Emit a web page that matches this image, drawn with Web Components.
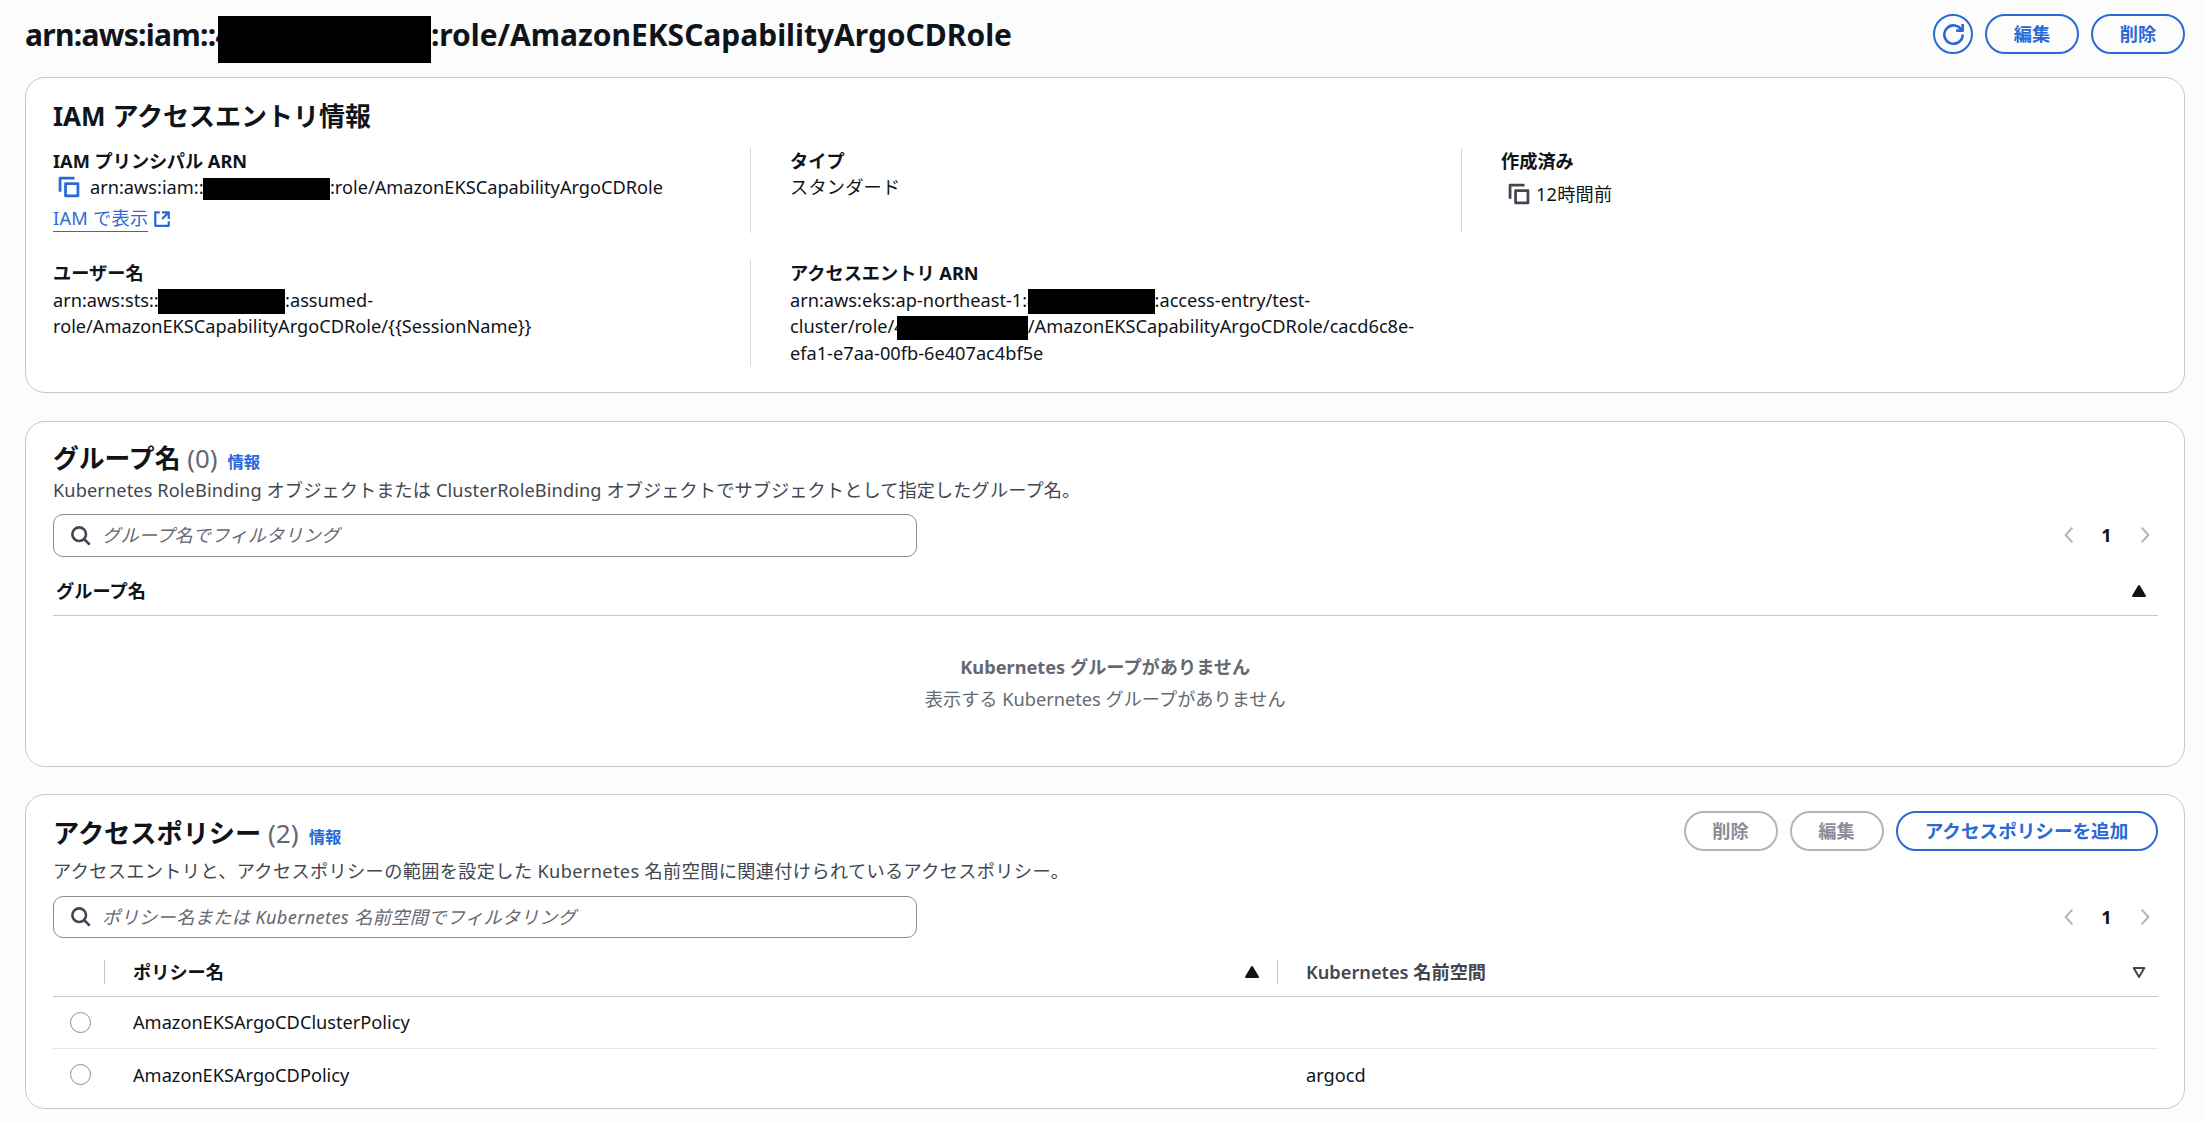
<!DOCTYPE html>
<html lang="ja"><head><meta charset="utf-8"><title>IAM access entry</title>
<style>
html,body{margin:0;padding:0}
body{background:#fcfcfd;color:#0f141a;font:18.2px/26.6px "Noto Sans","Noto Sans CJK JP",sans-serif;width:2204px;height:1122px;overflow:hidden}
</style></head><body>
<x-page>
  <x-pagehead>
    <span><span style="letter-spacing:-.7px">arn:aws:iam::4</span><x-redact style="--w:213px;--h:47px;--ml:-14px;--mr:0px;--t:2px"></x-redact>:role/AmazonEKSCapabilityArgoCDRole</span>
    <x-btn slot="actions" kind="icon"><x-icon name="refresh" size="21"></x-icon></x-btn>
    <x-btn slot="actions">編集</x-btn>
    <x-btn slot="actions">削除</x-btn>
  </x-pagehead>

  <x-card style="--pad:22px 27px 26px;--mb:28px">
    <x-heading>IAM アクセスエントリ情報</x-heading>
    <x-kvgrid>
      <x-kv label="IAM プリンシパル ARN" style="--h:85px">
        <x-copyline><x-icon name="copy" size="22" color="#2a69d6"></x-icon><span>arn:aws:iam::4<x-redact style="--w:127px;--h:22px;--ml:-11px;--mr:0px"></x-redact>:role/AmazonEKSCapabilityArgoCDRole</span></x-copyline>
        <x-extlink>IAM で表示</x-extlink>
      </x-kv>
      <x-kv label="タイプ" divider style="--h:85px"><span style="position:relative;top:-1px;letter-spacing:.2px">スタンダード</span></x-kv>
      <x-kv label="作成済み" divider style="--h:85px">
        <x-timeline><x-icon name="copy" size="22" color="#424650"></x-icon><span style="letter-spacing:.2px">12時間前</span></x-timeline>
      </x-kv>
      <x-kv label="ユーザー名">arn:aws:sts::4<x-redact style="--w:127px;--h:25px;--ml:-11px;--mr:0px"></x-redact>:assumed-<br>role/AmazonEKSCapabilityArgoCDRole/{{SessionName}}</x-kv>
      <x-kv label="アクセスエントリ ARN" divider style="--h:106px">arn:aws:eks:ap-northeast-1:4<x-redact style="--w:127px;--h:25px;--ml:-10px;--mr:0px"></x-redact>:access-entry/test-<br>cluster/role/4<x-redact style="--w:131px;--h:24px;--ml:-8px;--mr:0px"></x-redact>/AmazonEKSCapabilityArgoCDRole/cacd6c8e-<br>efa1-e7aa-00fb-6e407ac4bf5e</x-kv>
    </x-kvgrid>
  </x-card>

  <x-card style="--pad:20px 26.5px 0 27px;--mb:27px;--h:346px">
    <x-tablehead count="(0)" desc="Kubernetes RoleBinding オブジェクトまたは ClusterRoleBinding オブジェクトでサブジェクトとして指定したグループ名。" style="--desc-ls:.1px;--h2:25.8px;--h2-gap:0px;--desc-top:3px">グループ名</x-tablehead>
    <x-filterrow placeholder="グループ名でフィルタリング" style="--top:10px;--ih:43px;--ph-ls:.2px"></x-filterrow>
    <x-grouphead><span>グループ名</span><x-icon name="up" size="16"></x-icon></x-grouphead>
    <x-empty title-text="Kubernetes グループがありません">表示する Kubernetes グループがありません</x-empty>
  </x-card>

  <x-card style="--pad:22px 26.5px 0 27px;--h:315px">
    <x-tablehead count="(2)" desc="アクセスエントリと、アクセスポリシーの範囲を設定した Kubernetes 名前空間に関連付けられているアクセスポリシー。" style="--desc-top:9px;--desc-ls:.35px">アクセスポリシー
      <x-btn slot="actions" disabled>削除</x-btn>
      <x-btn slot="actions" disabled>編集</x-btn>
      <x-btn slot="actions" wide>アクセスポリシーを追加</x-btn>
    </x-tablehead>
    <x-filterrow placeholder="ポリシー名または Kubernetes 名前空間でフィルタリング" style="--top:11px;--ih:42px;--ph-ls:.35px"></x-filterrow>
    <x-policytable>
      <x-policyhead></x-policyhead>
      <x-policyrow name="AmazonEKSArgoCDClusterPolicy" ns="" sep></x-policyrow>
      <x-policyrow name="AmazonEKSArgoCDPolicy" ns="argocd"></x-policyrow>
    </x-policytable>
  </x-card>
</x-page>
<script>
const BLUE='#2a69d6';
const ICONS={
 refresh:'<path d="M10 5h5V0"/><path d="M15 8a7 7 0 1 1-.7-3"/>',
 copy:'<path d="M1.5 11.5V1.5h10.5"/><path d="M5.5 5.5h9v9h-9z"/>',
 ext:'<path d="M14 8V2H8M14 2 8 8"/><path d="M6 2H2v12h12v-4"/>',
 search:'<circle cx="7" cy="7" r="5.2"/><path d="m15 15-4.3-4.3"/>',
 left:'<path d="M11 1.5 5 8l6 6.5"/>',
 right:'<path d="M5 1.5 11 8l-6 6.5"/>',
 up:'<path d="M8 3 2 13h12z" fill="currentColor"/>',
 down:'<path d="M8 13 2.7 4h10.6z"/>'
};
function def(tag,css,html,extra){
  customElements.define(tag,class extends HTMLElement{
    connectedCallback(){
      if(this.shadowRoot)return;
      const r=this.attachShadow({mode:'open'});
      r.innerHTML='<style>'+css+'</style>'+(typeof html==='function'?html(this):html);
      if(extra)extra(this,r);
    }
  });
}
def('x-icon',':host{display:inline-flex;flex:none;line-height:0}svg{display:block;fill:none;stroke:currentColor;stroke-linejoin:round;stroke-linecap:butt}',
 h=>{const s=h.getAttribute('size')||20,w=h.getAttribute('sw')||2,c=h.getAttribute('color')||'currentColor';
  return `<svg width="${s}" height="${s}" viewBox="0 0 16 16" style="color:${c};stroke-width:${w}">${ICONS[h.getAttribute('name')]}</svg>`});
def('x-redact',':host{display:inline-block;background:#000;width:var(--w);height:var(--h);vertical-align:middle;margin:-14px var(--mr,0) -14px var(--ml,0);position:relative;top:var(--t,0)}','');
def('x-page',':host{display:block;padding:0 19px 0 25px}','<slot></slot>');
def('x-pagehead',':host{display:flex;justify-content:space-between;height:77px;box-sizing:border-box;padding-top:14px}.t{font-size:30px;line-height:40px;font-weight:700;padding-top:1px;white-space:nowrap;letter-spacing:-.02px}.a{display:flex;gap:12px;margin-right:0}',
 '<div class="t"><slot></slot></div><div class="a"><slot name="actions"></slot></div>');
def('x-btn',`:host{display:inline-flex;align-items:center;justify-content:center;box-sizing:border-box;height:40px;width:94px;border:2px solid ${BLUE};border-radius:20px;color:${BLUE};font-size:18.2px;font-weight:700;line-height:24px;background:#fff0}
 :host([kind=icon]){width:40px}
 :host([wide]){width:262px;font-size:18.6px}
 :host([disabled]){border-color:#b4b4bb;color:#8c8c94}`,'<slot></slot>');
def('x-card',':host{display:block;box-sizing:border-box;background:#fff;border:1.5px solid #c6c6cd;border-radius:20px;padding:var(--pad);margin-bottom:var(--mb,0);height:var(--h,auto)}','<slot></slot>');
def('x-heading',':host{display:block;font-size:26px;line-height:32px;font-weight:700}','<slot></slot>');
def('x-kvgrid',':host{display:grid;grid-template-columns:697px 711px 1fr;row-gap:27px;margin-top:16px}','<slot></slot>');
def('x-kv',`:host{display:block;box-sizing:border-box;min-height:var(--h,0);white-space:nowrap}
 :host([divider]){border-left:1.5px solid #d9d9de;padding-left:39px}
 .l{font-weight:700}`,h=>`<div class="l">${h.getAttribute('label')}</div><slot></slot>`);
def('x-copyline',':host{display:flex;align-items:center;padding-left:5px;gap:10px;height:25.6px}','<slot></slot>');
def('x-extlink',`:host{display:flex;align-items:center;gap:5px;color:${BLUE};margin-top:6px}
 span{border-bottom:1.5px solid ${BLUE};line-height:25px;padding-right:0;letter-spacing:.25px}`,
 '<span><slot></slot></span><x-icon name="ext" size="18" color="'+BLUE+'"></x-icon>');
def('x-timeline',':host{display:flex;align-items:center;padding-left:7px;gap:6px;margin-top:6px;color:#0f141a}','<slot></slot>');
def('x-tablehead',`:host{display:flex;justify-content:space-between;align-items:flex-start}
 h2{margin:0;font-size:var(--h2,26.2px);line-height:32px;font-weight:700;white-space:nowrap}
 .c{font-weight:400;color:#656871;margin-left:var(--h2-gap,0)}
 .i{font-size:16.4px;font-weight:700;color:${BLUE};margin-left:10px;line-height:1}
 .d{color:#424650;margin-top:var(--desc-top,4px);white-space:nowrap;letter-spacing:var(--desc-ls,0)}
 .a{display:flex;gap:12px;margin-top:-6px}`,
 h=>`<div><h2><slot></slot> <span class="c">${h.getAttribute('count')}</span><span class="i">情報</span></h2><div class="d">${h.getAttribute('desc')}</div></div><div class="a"><slot name="actions"></slot></div>`);
def('x-filterrow',`:host{display:flex;justify-content:space-between;align-items:center;margin-top:var(--top)}
 .in{box-sizing:border-box;width:864px;height:var(--ih);border:1.5px solid #8c8c94;border-radius:10px;display:flex;align-items:center;padding-left:16px;gap:11px;color:#424650}
 .p{font-style:italic;color:#656871;letter-spacing:var(--ph-ls,0)}
 .pg{display:flex;align-items:center;gap:0;color:#b4b4bb;margin-right:4px}
 .n{color:#0f141a;font-weight:700;width:46px;margin:0 6px;text-align:center}`,
 h=>`<div class="in"><x-icon name="search" size="21"></x-icon><span class="p">${h.getAttribute('placeholder')}</span></div>
 <div class="pg"><x-icon name="left" size="18" sw="1.8"></x-icon><span class="n">1</span><x-icon name="right" size="18" sw="1.8"></x-icon></div>`);
def('x-grouphead',':host{display:flex;justify-content:space-between;align-items:center;height:59px;box-sizing:border-box;border-bottom:1.5px solid #c6c6cd;padding:10px 11px 0 3px;font-weight:700}','<slot></slot>');
def('x-empty',':host{display:block;text-align:center;color:#656871;padding-top:35px;line-height:32px}b{display:block;font-weight:700}',
 h=>`<b>${h.getAttribute('title-text')}</b><slot></slot>`);
def('x-policytable',':host{display:block;margin-top:11px}','<slot></slot>');
const COLS='grid-template-columns:52px 1173px 1fr;';
def('x-policyhead',`:host{display:grid;${COLS}align-items:center;height:48px;box-sizing:border-box;border-bottom:1.5px solid #c6c6cd;font-weight:700;padding-top:0}
 .c{height:24px;display:flex;align-items:center;justify-content:space-between;box-sizing:border-box}
 .s{border-right:1.5px solid #c6c6cd}
 .n{padding-left:28px;padding-right:17px;border-right:1.5px solid #c6c6cd}
 .k{padding-left:28px;padding-right:11px;color:#424650;font-weight:600}`,
 `<div class="c s"></div><div class="c n"><span>ポリシー名</span><x-icon name="up" size="16"></x-icon></div><div class="c k"><span>Kubernetes 名前空間</span><x-icon name="down" size="16" sw="2"></x-icon></div>`);
def('x-policyrow',`:host{display:grid;${COLS}align-items:center;height:52px;box-sizing:border-box}
 :host([sep]){border-bottom:1.5px solid #e8e8ec}
 .r{box-sizing:border-box;width:21px;height:21px;border:1.5px solid #8c8c94;border-radius:50%;margin-left:17px}
 .n{padding-left:28px}.k{padding-left:28px}`,
 h=>`<div><div class="r"></div></div><div class="n">${h.getAttribute('name')}</div><div class="k">${h.getAttribute('ns')}</div>`);
</script>
</body></html>
